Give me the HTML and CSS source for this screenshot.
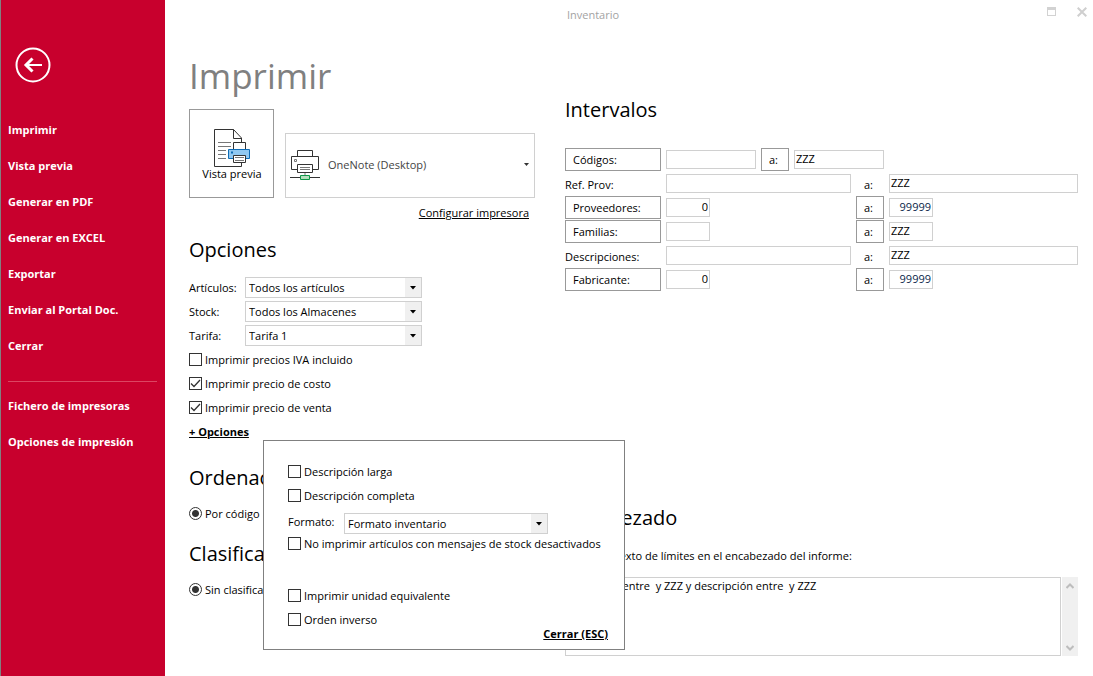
FILE: index.html
```html
<!DOCTYPE html>
<html lang="es">
<head>
<meta charset="utf-8">
<title>Inventario</title>
<link rel="stylesheet" href="styles.css">
</head>
<body>
<div class="app">
  <aside class="sidebar">
    <button class="back" type="button" aria-label="Volver">
      <svg width="36" height="36" viewBox="0 0 36 36" fill="none" stroke="#fff">
        <circle cx="18" cy="18" r="16.5" stroke-width="2"/>
        <path d="M27 18H10.5" stroke-width="2"/>
        <path d="M17.500 11.500L11 18l6.500 6.500" stroke-width="3"/>
      </svg>
    </button>
    <nav class="menu">
      <a href="#">Imprimir</a>
      <a href="#">Vista previa</a>
      <a href="#">Generar en PDF</a>
      <a href="#">Generar en EXCEL</a>
      <a href="#">Exportar</a>
      <a href="#">Enviar al Portal Doc.</a>
      <a href="#">Cerrar</a>
      <hr>
      <a href="#">Fichero de impresoras</a>
      <a href="#">Opciones de impresión</a>
    </nav>
  </aside>

  <div class="window">
    <header class="titlebar">
      <span class="caption">Inventario</span>
      <button type="button" aria-label="Maximizar">
        <svg width="10" height="10" viewBox="0 0 10 10" fill="#d2d2d2"><path fill-rule="evenodd" d="M0 0h9v9H0zM1 3v5h7V3z"/></svg>
      </button>
      <button type="button" aria-label="Cerrar ventana">
        <svg width="10" height="10" viewBox="0 0 10 10" fill="none" stroke="#cfcfcf" stroke-width="2"><path d="M.7.7l8.600 8.600M9.300.7L.7 9.300"/></svg>
      </button>
    </header>

    <main class="content">
      <div class="left">
        <h1>Imprimir</h1>
        <div class="printer-row">
          <button class="preview" type="button">
            <svg width="38" height="38" viewBox="0 0 38 38" fill="none">
              <path d="M1.500.5h19l8 8.500v28.500h-27z" fill="#fff" stroke="#333"/>
              <path d="M20.500.5v9h8" stroke="#333"/>
              <path d="M5 13.500h13M5 17.500h13M5 21.500h8M5 25.500h8M5 29.500h8" stroke="#777"/>
              <path d="M20.500 13.500h12v8h-12z" fill="#fff" stroke="#333"/>
              <path d="M15.500 20.500h21v9h-21z" fill="#91c8f0" stroke="#0f6cb5"/>
              <path d="M18 22.500h2v2h-2z" fill="#0f6cb5"/>
              <path d="M20.500 26.500h12v7h-12z" fill="#fff" stroke="#333"/>
              <path d="M22 28.500h9M22 31.500h9" stroke="#777"/>
            </svg>
            <span>Vista previa</span>
          </button>
          <button class="printer" type="button">
            <svg width="30" height="30" viewBox="0 0 30 30" fill="none">
              <path d="M7.500.5h15v6h-15z" stroke="#333"/>
              <path d="M7 19.500H1.500v-13h27v13H23" stroke="#333"/>
              <path d="M4.500 9.500h2v2h-2z" stroke="#777"/>
              <path d="M7.500 14.500h15v8h-15z" fill="#fff" stroke="#333"/>
              <path d="M10 17.500h10M10 19.500h10" stroke="#777"/>
              <path d="M15 23v3" stroke="#bbb" stroke-width="2"/>
              <path d="M0 27.500h30" stroke="#333"/>
              <path d="M10.500 25.500h9v4h-9z" fill="#b5e0bd" stroke="#109648"/>
            </svg>
            <span>OneNote (Desktop)</span>
            <svg class="caret" width="5" height="3" viewBox="0 0 5 3" fill="#333"><path d="M0 0h5L2.500 3z"/></svg>
          </button>
        </div>
        <a class="configure" href="#">Configurar impresora</a>

        <h2>Opciones</h2>
        <div class="option"><label for="articulos">Artículos:</label><select id="articulos"><option>Todos los artículos</option></select></div>
        <div class="option"><label for="stock">Stock:</label><select id="stock"><option>Todos los Almacenes</option></select></div>
        <div class="option"><label for="tarifa">Tarifa:</label><select id="tarifa"><option>Tarifa 1</option></select></div>
        <label class="check"><input type="checkbox">Imprimir precios IVA incluido</label>
        <label class="check"><input type="checkbox" checked>Imprimir precio de costo</label>
        <label class="check"><input type="checkbox" checked>Imprimir precio de venta</label>
        <div class="more">
          <a class="strong-link" href="#">+ Opciones</a>
          <section class="popup" role="dialog" aria-label="Más opciones">
            <label class="check"><input type="checkbox">Descripción larga</label>
            <label class="check"><input type="checkbox">Descripción completa</label>
            <div class="option format"><label for="formato">Formato:</label><select id="formato"><option>Formato inventario</option></select></div>
            <label class="check"><input type="checkbox">No imprimir artículos con mensajes de stock desactivados</label>
            <div class="second-group">
              <label class="check"><input type="checkbox">Imprimir unidad equivalente</label>
              <label class="check"><input type="checkbox">Orden inverso</label>
            </div>
            <a class="strong-link close" href="#">Cerrar (ESC)</a>
          </section>
        </div>

        <h2>Ordenación</h2>
        <label class="check"><input type="radio" name="orden" checked>Por código</label>
        <h2>Clasificación</h2>
        <label class="check"><input type="radio" name="clase" checked>Sin clasificar</label>
      </div>

      <div class="right">
        <h2>Intervalos</h2>
        <div class="ranges">
          <div class="range codes">
            <button type="button">Códigos:</button><input type="text" aria-label="Código desde">
            <button type="button">a:</button><input type="text" aria-label="Código hasta" value="ZZZ">
          </div>
          <div class="range">
            <label for="ref">Ref. Prov:</label><input id="ref" type="text">
            <label class="to" for="ref2">a:</label><input id="ref2" type="text" value="ZZZ">
          </div>
          <div class="range">
            <button type="button">Proveedores:</button><input class="short number" type="text" aria-label="Proveedor desde" value="0">
            <button type="button">a:</button><input class="short number last" type="text" aria-label="Proveedor hasta" value="99999">
          </div>
          <div class="range">
            <button type="button">Familias:</button><input class="short" type="text" aria-label="Familia desde">
            <button type="button">a:</button><input class="short" type="text" aria-label="Familia hasta" value="ZZZ">
          </div>
          <div class="range">
            <label for="desc">Descripciones:</label><input id="desc" type="text">
            <label class="to" for="desc2">a:</label><input id="desc2" type="text" value="ZZZ">
          </div>
          <div class="range">
            <button type="button">Fabricante:</button><input class="short number" type="text" aria-label="Fabricante desde" value="0">
            <button type="button">a:</button><input class="short number last" type="text" aria-label="Fabricante hasta" value="99999">
          </div>
        </div>

        <section class="heading-text">
          <h2>Encabezado</h2>
          <label class="check"><input type="checkbox">Incluir texto de límites en el encabezado del informe:</label>
          <div class="memo">
            <textarea aria-label="Texto del encabezado">Un código entre  y ZZZ y descripción entre  y ZZZ</textarea>
            <div class="scroll">
              <button type="button" aria-label="Subir"><svg width="8" height="6" viewBox="0 0 8 6" fill="none" stroke="#bdbdbd" stroke-width="2"><path d="M.5 5L4 1.500 7.500 5"/></svg></button>
              <button type="button" aria-label="Bajar"><svg width="8" height="6" viewBox="0 0 8 6" fill="none" stroke="#bdbdbd" stroke-width="2"><path d="M.5 1L4 4.500 7.500 1"/></svg></button>
            </div>
          </div>
        </section>
      </div>
    </main>
  </div>
</div>
</body>
</html>
```
FILE: styles.css
```css
* { box-sizing: border-box; }
body {
  margin: 0;
  background: #fff;
  color: #000;
  font: 11px/16px "Open Sans", "Noto Sans", sans-serif;
}
button, input, select, textarea { font: inherit; color: inherit; margin: 0; border-radius: 0; }
button { background: #fff; padding: 0; }
a { color: inherit; }

.app { display: flex; min-height: 100vh; }

.sidebar {
  width: 165px;
  flex: none;
  padding: 47px 8px 0 7px;
  background: #c8002d;
  border-left: 1px solid #808080;
  color: #fff;
}
.back { display: block; margin-left: 7px; border: 0; background: none; height: 36px; }
.back svg { display: block; }
.menu { display: flex; flex-direction: column; margin-top: 29px; font-weight: 700; }
.menu a { line-height: 36px; text-decoration: none; }
.menu hr { width: 100%; margin: 17px 0 6px; border: 0; border-top: 1px solid #dc4562; }

.window { flex: 1; min-width: 0; }
.titlebar { display: flex; align-items: flex-start; gap: 20px; height: 30px; padding: 6px 6px 0 0; }
.caption { flex: 1; padding-top: 1px; text-align: center; color: #a3a3a3; padding-right: 6px; }
.titlebar button { border: 0; width: 10px; height: 12px; }
.titlebar svg { display: block; }

.content {
  display: grid;
  grid-template-columns: 346px minmax(0, 1fr);
  column-gap: 30px;
  padding: 0 15px 20px 24px;
}
.left, .right { display: flex; flex-direction: column; }

h1 { margin: 20px 0 7px; font-size: 35px; line-height: 52px; font-weight: 400; color: #808080; }
h2 { margin: 0; font-size: 20px; line-height: 28px; font-weight: 400; }

.printer-row { display: flex; align-items: flex-end; gap: 11px; }
.preview {
  display: flex; flex-direction: column; align-items: center;
  width: 85px; height: 89px; padding: 19px 0 0 1px;
  border: 1px solid #999;
}
.preview span { line-height: 14px; }
.printer {
  display: flex; flex: 1; align-items: center; gap: 8px;
  height: 65px; padding: 0 5px 2px 4px;
  border: 1px solid #d0d0d0;
  color: #444;
}
.printer .caret { margin-left: auto; }
.configure { align-self: flex-end; margin: 7px 6px 15px 0; }
.configure + h2 { margin-bottom: 12px; }

.option { display: flex; align-items: center; height: 24px; }
.option label { width: 56px; }
.option select {
  appearance: none;
  width: 177px; height: 21px;
  margin-bottom: 1px;
  padding: 1px 18px 0 3px;
  border: 1px solid #d0d0d0;
  background: #fff url("data:image/svg+xml,%3Csvg xmlns='http://www.w3.org/2000/svg' width='16' height='19'%3E%3Cpath fill='%23f0f0f0' d='M0 0h16v19H0z'/%3E%3Cpath d='M5 8h6l-3 3.500z'/%3E%3C/svg%3E") right center no-repeat;
}

.check { display: flex; align-items: center; gap: 3px; height: 24px; white-space: nowrap; }
.check input {
  appearance: none;
  flex: none;
  width: 13px; height: 13px;
  margin-bottom: 1px;
  border: 1px solid #333;
  background: #fff center no-repeat;
}
.check input[type="checkbox"]:checked {
  background-image: url("data:image/svg+xml,%3Csvg xmlns='http://www.w3.org/2000/svg' width='11' height='11'%3E%3Cpath fill='none' stroke='%23333' stroke-width='1.300' d='M1 5.500l3 3 6-6.500'/%3E%3C/svg%3E");
}
.check input[type="radio"] { border-radius: 50%; background-image: radial-gradient(circle, #333 3px, transparent 4px); }

.strong-link { font-weight: 700; }
.more { position: relative; height: 24px; padding-top: 4px; margin-bottom: 20px; }
.popup {
  position: absolute;
  left: 74px; top: 20px;
  width: 362px;
  padding: 19px 16px 7px 24px;
  border: 1px solid #808080;
  background: #fff;
  display: flex; flex-direction: column;
  z-index: 1;
}
.popup .option { margin-top: 3px; }
.popup .option label { padding-bottom: 2px; }
.popup .option select { width: 204px; margin: 0; }
.format + .check { height: 18px; }
.second-group { margin: 31px 0 -6px; }
.popup .close { align-self: flex-end; }

.left > .option ~ .check { margin: 0; }
.left > .more ~ .check { margin: 10px 0 14px; }

.right > h2 { margin: 66px 0 24px; }
.range {
  display: grid;
  grid-template-columns: 96px minmax(0, 185fr) 28px minmax(0, 189fr);
  align-items: center;
  column-gap: 5px;
  height: 24px;
}
.codes { grid-template-columns: 96px 90px 28px 90px; }
.range button { height: 23px; margin-bottom: 1px; border: 1px solid #999; text-align: left; padding-left: 7px; }
.range label { padding-top: 1px; }
.range .to { padding-left: 8px; }
.range input { width: 100%; height: 19px; margin-bottom: 1px; padding: 0 1px 2px; border: 1px solid #d0d0d0; }
.range .short { width: 44px; }
.range .number { text-align: right; }
.range .last { color: #0a1f4a; }

.heading-text { margin-top: 212px; }
.heading-text .check { margin: 12px 0 9px; }
.memo { display: flex; gap: 1px; height: 79px; }
.memo textarea { flex: 1; min-width: 0; padding: 0 2px; border: 1px solid #d0d0d0; resize: none; overflow: hidden; }
.scroll { width: 16px; display: flex; flex-direction: column; justify-content: space-between; background: #f0f0f0; }
.scroll button { display: flex; align-items: center; justify-content: center; height: 17px; border: 0; background: none; }
```
